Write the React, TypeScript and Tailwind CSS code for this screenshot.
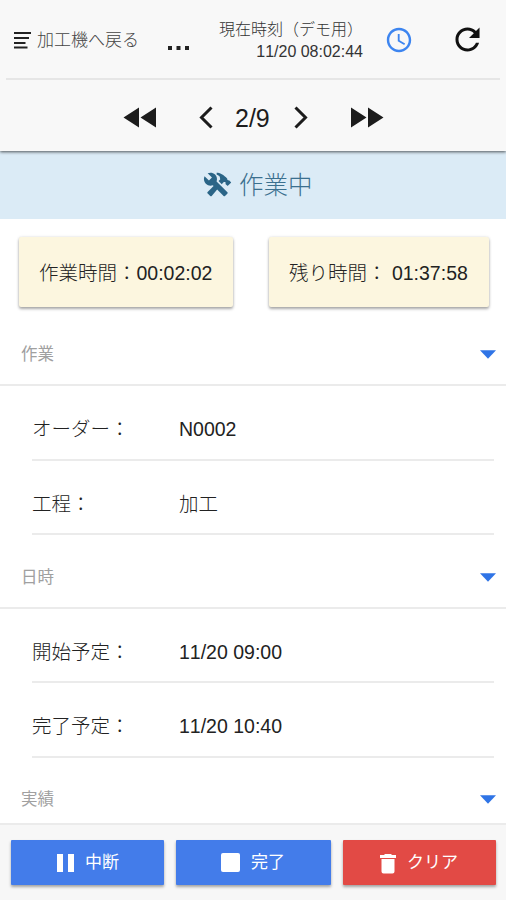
import type { ReactNode } from "react";
import { IoMdConstruct, IoMdRefresh, IoMdTime } from "react-icons/io";

function SectionHeader({ title, className }: { title: string; className: string }) {
  return (
    <div className={`flex items-center justify-between pl-[21px] pr-[10px] text-[16.5px] font-normal text-[#a0a0a0] ${className}`}>
      <span>{title}</span>
      <svg width="16" height="9" viewBox="0 0 16 9" className="fill-[#2f74e6]">
        <path d="M0 .3h16L8 8.700z" />
      </svg>
    </div>
  );
}

function Row({ label, value, className }: { label: string; value: string; className: string }) {
  return (
    <div className={`ml-8 mr-3 flex items-center border-b-2 border-[#ebebeb] text-[19.5px] text-[#222] ${className}`}>
      <span className="w-[147px]">{label}</span>
      <span>{value}</span>
    </div>
  );
}

function TimeCard({ className, children }: { className: string; children: ReactNode }) {
  return (
    <div
      className={`flex h-[70px] items-center rounded-[2px] bg-[#fcf6df] pt-[3px] pl-5 text-[19.5px] whitespace-pre text-[#222] shadow-[0_2px_3px_rgba(0,0,0,0.32),0_0_3px_rgba(0,0,0,0.12)] ${className}`}
    >
      {children}
    </div>
  );
}

function ActionButton({ className, children }: { className: string; children: ReactNode }) {
  return (
    <button
      className={`flex h-[45px] items-center rounded-[1px] text-[17px] font-normal text-white shadow-[0_2px_3px_rgba(0,0,0,0.35)] ${className}`}
    >
      {children}
    </button>
  );
}

export default function App() {
  return (
    <div className="flex h-[900px] w-[506px] flex-col overflow-hidden bg-white font-['Liberation_Sans','Noto_Sans_CJK_JP',sans-serif] leading-none font-light [font-kerning:none]">
      <header className="z-10 h-[151px] shrink-0 bg-[#f8f8f8] shadow-[0_1px_3px_rgba(0,0,0,0.65)]">
        <div className="mx-[6px] flex h-[80px] items-center border-b-2 border-[#e6e6e6] pr-[15px] pl-2">
          <svg width="17" height="17" viewBox="0 0 17 17" className="mt-[2px] fill-[#222]">
            <path d="M0 0h17v2H0zM0 5h15v2H0zM0 10h11.500v2H0zM0 14.500h13.500v2H0z" />
          </svg>
          <span className="ml-[6px] w-[102px] pt-[2px] text-[17px] whitespace-nowrap text-[#444]">加工機へ戻る</span>
          <svg width="22" height="4" viewBox="0 0 22 4" className="mt-[17px] ml-[29px] fill-[#222]">
            <path d="M0 0h4v4H0zM8.500 0h4v4h-4zM17 0h4v4h-4z" />
          </svg>
          <div className="ml-[29px] flex w-[144px] flex-col items-end pt-[4px] text-base leading-[22px] whitespace-nowrap text-[#333]">
            <span className="h-[22px]">現在時刻（デモ用）</span>
            <span className="h-[22px]">11/20 08:02:44</span>
          </div>
          <IoMdTime className="mt-[2px] ml-[21px] size-[30px] shrink-0 text-[#2878ee]" />
          <IoMdRefresh className="ml-auto size-[35px] shrink-0 text-[#111]" />
        </div>
        <div className="flex h-[71px] items-center pt-1 pl-[123px] text-[#1c1c1c]">
          <svg width="33" height="21" viewBox="0 0 33 21" className="fill-current">
            <path d="M16 .5v20L.5 10.500zM33 .5v20L17.500 10.500z" />
          </svg>
          <svg width="14" height="23" viewBox="0 0 14 23" className="ml-[43px] fill-none stroke-current" strokeWidth="3">
            <path d="M12.500 1.500L2.500 11.500l10 10" />
          </svg>
          <span className="ml-[22px] w-[36px] pt-[2px] text-[25px]">2/9</span>
          <svg width="14" height="23" viewBox="0 0 14 23" className="ml-[23px] fill-none stroke-current" strokeWidth="3">
            <path d="M1.500 1.500l10 10-10 10" />
          </svg>
          <svg width="33" height="21" viewBox="0 0 33 21" className="ml-[43px] fill-current">
            <path d="M0 .5v20l15.500-10zM17 .5v20l15.500-10z" />
          </svg>
        </div>
      </header>

      <div className="flex h-[68px] shrink-0 items-center bg-[#dbebf6] pl-[203px] text-[24.5px] text-[#3b708f]">
        <IoMdConstruct className="mb-[2px] size-[29px] text-[#2b6587]" />
        <span className="ml-[7px] pt-[3px]">作業中</span>
      </div>

      <div className="mt-[18px] flex h-[70px] shrink-0 pl-[19px]">
        <TimeCard className="w-[214px]">作業時間：00:02:02</TimeCard>
        <TimeCard className="ml-9 w-[220px]">残り時間： 01:37:58</TimeCard>
      </div>

      <main className="min-h-0 flex-1 overflow-hidden">
        <SectionHeader title="作業" className="h-[79px] border-b-2 border-[#ebebeb] pt-[17px]" />
        <Row label="オーダー：" value="N0002" className="h-[75px] pt-[14px]" />
        <Row label="工程：" value="加工" className="h-[74px] pt-[15px]" />
        <SectionHeader title="日時" className="h-[74px] border-b-2 border-[#ebebeb] pt-[12px]" />
        <Row label="開始予定：" value="11/20 09:00" className="h-[74px] pt-[15px]" />
        <Row label="完了予定：" value="11/20 10:40" className="h-[75px] pt-[14px]" />
        <SectionHeader title="実績" className="h-[74px] pt-[8px]" />
      </main>

      <footer className="flex h-[77px] shrink-0 border-t-2 border-[#ebebeb] bg-[#f7f7f7] pt-[15px] pl-[11px]">
        <ActionButton className="w-[153px] bg-[#437cea] pl-[46px]">
          <svg width="17" height="18" viewBox="0 0 17 18" className="fill-current">
            <path d="M0 0h6v18H0zM11 0h6v18h-6z" />
          </svg>
          <span className="ml-[11px]">中断</span>
        </ActionButton>
        <ActionButton className="ml-[12px] w-[155px] bg-[#437cea] pl-[45px]">
          <span className="size-[19px] rounded-[2px] bg-white" />
          <span className="ml-[11px]">完了</span>
        </ActionButton>
        <ActionButton className="ml-[12px] w-[153px] bg-[#e24a45] pl-[37px]">
          <svg width="16" height="20" viewBox="0 0 16 20" className="mt-[2px] fill-current">
            <path d="M5 0h6l1 1h4v3H0V1h4zM1.500 5h13v12.500a2 2 0 0 1-2 2h-9a2 2 0 0 1-2-2z" />
          </svg>
          <span className="ml-[11px]">クリア</span>
        </ActionButton>
      </footer>
    </div>
  );
}
